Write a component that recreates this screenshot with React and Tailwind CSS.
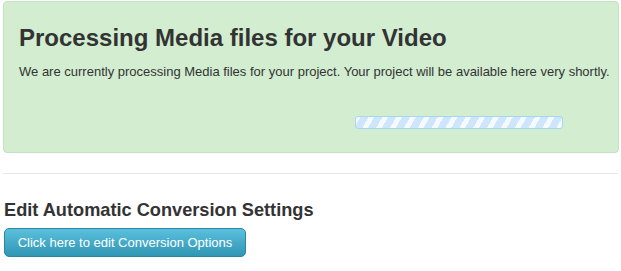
export default function App() {
  return (
    <div className="w-[621px] h-[271px] bg-white overflow-hidden" style={{ fontFamily: '"Liberation Sans", Arial, sans-serif' }}>
      <div className="ml-[3px] mt-[1px] w-[616px] h-[152px] rounded-[4px] border border-[#c3e2bf] bg-[#d2edd0] pl-[15px] pt-[20px]">
        <h2 className="text-[24px] leading-[32px] font-bold text-[#333]">Processing Media files for your Video</h2>
        <p className="mt-[8px] text-[13px] leading-[19px] text-[#333] whitespace-nowrap">We are currently processing Media files for your project. Your project will be available here very shortly.</p>
        <div className="mt-[35px] ml-[336px] w-[208px] h-[13px] rounded-[3px] border border-[#a9d4f2] bg-[#cfe7fb] bg-[repeating-linear-gradient(-60deg,#f4faff_0px,#f4faff_5px,#cde6fb_5px,#cde6fb_12px)]" />
      </div>
      <div className="mx-[3px] mt-[20px] h-px bg-[#e6e6e6]" />
      <h3 className="ml-[4px] mt-[26px] text-[18.2px] leading-[21px] font-bold text-[#333]">Edit Automatic Conversion Settings</h3>
      <button className="ml-[4px] mt-[7px] w-[242px] h-[29px] rounded-[5px] border border-[#2a86a3] bg-gradient-to-b from-[#5bc0de] to-[#2f96b4] text-white text-[13px]" style={{ fontFamily: '"Liberation Sans", Arial, sans-serif' }}>Click here to edit Conversion Options</button>
    </div>
  );
}
